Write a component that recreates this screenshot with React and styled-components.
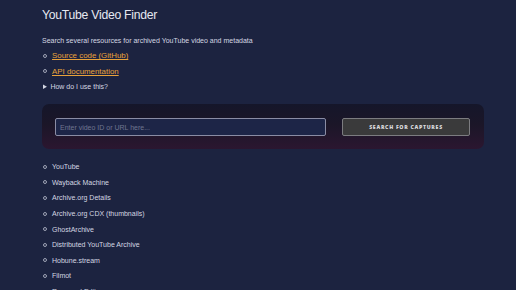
import React from 'react'
import styled, { createGlobalStyle } from 'styled-components'

const GlobalStyle = createGlobalStyle`
  html, body {
    margin: 0;
    padding: 0;
    background: #1c2340;
  }
  body {
    font-family: "Liberation Sans", Arial, sans-serif;
    color: #d4d7e2;
  }
`

const Page = styled.div`
  min-height: 290px;
  padding: 0 31px 0 42px;
  background: #1c2340;
`

const Title = styled.h1`
  margin: 0;
  padding-top: 7px;
  font-size: 12.2px;
  letter-spacing: -0.25px;
  line-height: 17px;
  font-weight: 400;
  color: #e6e8f0;
`

const Intro = styled.p`
  margin: 0;
  padding-top: 12px;
  font-size: 7px;
  line-height: 10px;
  color: #d4d7e2;
`

const BulletList = styled.ul`
  margin: ${({ $top }) => $top}px 0 0 0;
  padding: 0;
  list-style: none;
  font-size: 7px;
`

const Item = styled.li`
  display: flex;
  align-items: center;
  gap: 5px;
  height: ${({ $h }) => $h}px;
  color: #d4d7e2;
  &::before {
    content: '';
    flex: none;
    width: 2px;
    height: 2px;
    margin-left: 1px;
    border: 1px solid #9fa3b6;
    border-radius: 50%;
  }
`

const Link = styled.a`
  font-size: 7.9px;
  color: #e8a23a;
  text-decoration: underline;
  text-underline-offset: 1px;
`

const Details = styled.details`
  font-size: 7px;
  line-height: 16px;
  color: #d4d7e2;
  summary {
    cursor: pointer;
    padding-left: 1px;
  }
  summary::marker {
    font-size: 7px;
  }
`

const Panel = styled.div`
  margin-top: 9px;
  width: 442px;
  box-sizing: border-box;
  padding: 14px 14px 13px 13px;
  border-radius: 7px;
  background: linear-gradient(180deg, #15162a 0%, #1b1628 45%, #2b1630 100%);
  display: flex;
  align-items: center;
  gap: 16px;
`

const Input = styled.input`
  width: 271px;
  height: 18px;
  box-sizing: border-box;
  background: #1d2547;
  border: 1px solid #8a8ca4;
  border-radius: 2px;
  padding: 0 4px;
  font-family: "Liberation Sans", Arial, sans-serif;
  font-size: 7px;
  color: #d4d7e2;
  outline: none;
  &::placeholder {
    color: #6f7590;
  }
`

const SearchButton = styled.button`
  width: 128px;
  height: 18px;
  box-sizing: border-box;
  background: #3a3a3b;
  border: 1px solid #7c7c80;
  border-radius: 2px;
  color: #d8d8dc;
  font-family: "Open Sans", "Liberation Sans", sans-serif;
  font-weight: 800;
  font-size: 5.2px;
  letter-spacing: 0.7px;
  text-transform: uppercase;
  padding: 0;
`

const sources = [
  'YouTube',
  'Wayback Machine',
  'Archive.org Details',
  'Archive.org CDX (thumbnails)',
  'GhostArchive',
  'Distributed YouTube Archive',
  'Hobune.stream',
  'Filmot',
  'Removed Edits',
]

export default function App() {
  return (
    <>
      <GlobalStyle />
      <Page>
        <Title>YouTube Video Finder</Title>
        <Intro>Search several resources for archived YouTube video and metadata</Intro>
        <BulletList $top={2}>
          <Item $h={15.5}>
            <Link href="#">Source code (GitHub)</Link>
          </Item>
          <Item $h={15.5}>
            <Link href="#">API documentation</Link>
          </Item>
        </BulletList>
        <Details>
          <summary>How do I use this?</summary>
        </Details>
        <Panel>
          <Input placeholder="Enter video ID or URL here..." />
          <SearchButton>Search for captures</SearchButton>
        </Panel>
        <BulletList $top={10}>
          {sources.map((s) => (
            <Item key={s} $h={15.6}>{s}</Item>
          ))}
        </BulletList>
      </Page>
    </>
  )
}
